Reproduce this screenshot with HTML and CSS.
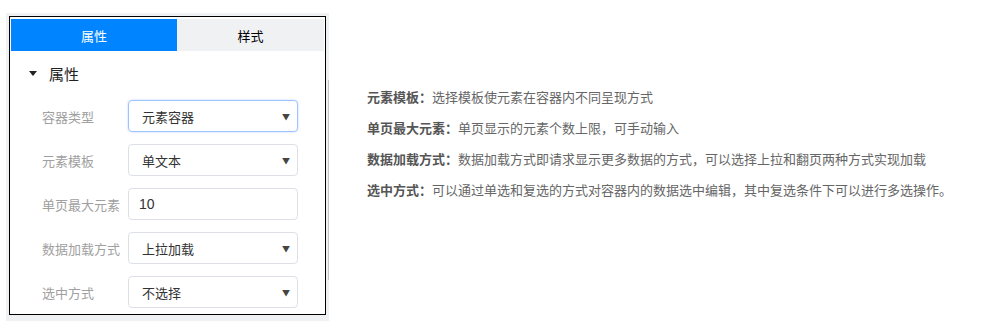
FILE: index.html
```html
<!DOCTYPE html>
<html lang="zh">
<head>
    <meta charset="utf-8">
    <title>容器属性</title>
    <link rel="stylesheet" href="styles.css">
</head>
<body>
    <div class="page">
        <div class="frame">
            <div class="panel">
                <div class="tabs">
                    <div class="tab active">属性</div>
                    <div class="tab">样式</div>
                </div>

                <div class="section-title">
                    <span class="caret"></span>
                    <span>属性</span>
                </div>

                <div class="rows">
                    <div class="row">
                        <label>容器类型</label>
                        <div class="field focus">元素容器<span class="arrow">▼</span></div>
                    </div>
                    <div class="row">
                        <label>元素模板</label>
                        <div class="field">单文本<span class="arrow">▼</span></div>
                    </div>
                    <div class="row">
                        <label>单页最大元素</label>
                        <div class="field input">10</div>
                    </div>
                    <div class="row">
                        <label>数据加载方式</label>
                        <div class="field">上拉加载<span class="arrow">▼</span></div>
                    </div>
                    <div class="row">
                        <label>选中方式</label>
                        <div class="field">不选择<span class="arrow">▼</span></div>
                    </div>
                </div>
            </div>
            <div class="scroll-thumb"></div>
        </div>

        <div class="notes">
            <p><b>元素模板：</b>选择模板使元素在容器内不同呈现方式</p>
            <p><b>单页最大元素：</b>单页显示的元素个数上限，可手动输入</p>
            <p><b>数据加载方式：</b>数据加载方式即请求显示更多数据的方式，可以选择上拉和翻页两种方式实现加载</p>
            <p><b>选中方式：</b>可以通过单选和复选的方式对容器内的数据选中编辑，其中复选条件下可以进行多选操作。</p>
        </div>
    </div>
</body>
</html>
```

FILE: styles.css
```css
body {
    margin: 0;
    background-color: #fff;
    font-family: "Microsoft YaHei", "Noto Sans CJK SC", sans-serif;
}

.page {
    display: flex;
    align-items: flex-start;
    padding: 13px 0 0 6px;
}

.frame {
    position: relative;
    width: 323px;
    height: 308px;
    background-color: #f0f1f3;
    padding: 3px 0 0 3px;
    box-sizing: border-box;
}

.panel {
    width: 317px;
    height: 299px;
    box-sizing: border-box;
    border: 1px solid #000;
    background-color: #fff;
    padding: 2px 1px 0 1px;
    overflow: hidden;
}

.scroll-thumb {
    position: absolute;
    left: 322px;
    top: 67px;
    width: 1px;
    height: 200px;
    background-color: #c4c4c4;
}

.tabs {
    display: flex;
    height: 32px;
}

.tab {
    flex: 1;
    display: flex;
    align-items: center;
    justify-content: center;
    font-size: 13px;
    color: #000;
    background-color: #f0f1f3;
}

.tab.active {
    flex: 0 0 166px;
    background-color: #0084ff;
    color: #fff;
}

.section-title {
    display: flex;
    align-items: center;
    height: 44px;
    padding-left: 18px;
    font-size: 15px;
    color: #222;
}

.caret {
    width: 0;
    height: 0;
    border-left: 4px solid transparent;
    border-right: 4px solid transparent;
    border-top: 5px solid #222;
    margin-right: 12px;
}

.rows {
    display: grid;
    grid-gap: 12px;
    padding: 5px 0 0 31px;
}

.row {
    display: flex;
    align-items: center;
}

.row label {
    width: 86px;
    font-size: 13px;
    color: #a0a0a0;
}

.field {
    position: relative;
    width: 170px;
    height: 32px;
    box-sizing: border-box;
    border: 1px solid #dcdfe6;
    border-radius: 4px;
    padding-left: 13px;
    display: flex;
    align-items: center;
    font-size: 13px;
    color: #333;
}

.field.input {
    padding-left: 10px;
    font-family: Arial, "Liberation Sans", sans-serif;
    font-size: 14px;
}

.field.focus {
    border-color: #9cc2ff;
    box-shadow: 0 0 2px rgba(110, 160, 255, 0.5);
}

.arrow {
    position: absolute;
    right: 7px;
    top: 10px;
    font-size: 8px;
    color: #444;
}

.notes {
    margin-left: 38px;
    padding-top: 75px;
}

.notes p {
    margin: 0 0 13px 0;
    font-size: 13px;
    line-height: 18px;
    color: #666;
}

.notes b {
    color: #555;
}
```
